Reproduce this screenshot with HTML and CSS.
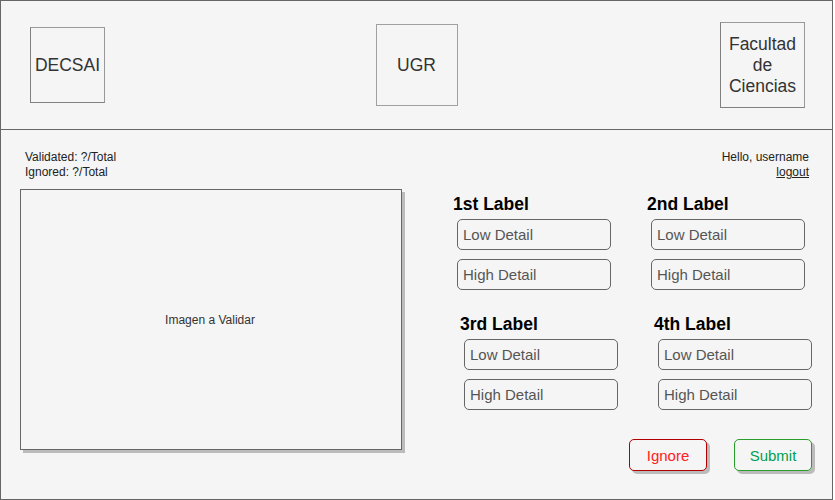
FILE: index.html
```html
<!DOCTYPE html>
<html lang="es">
<head>
<meta charset="utf-8">
<title>Validador</title>
<link rel="stylesheet" href="styles.css">
</head>
<body>
<div class="frame">
  <header class="header">
    <div class="logo logo-left">DECSAI</div>
    <div class="logo logo-center">UGR</div>
    <div class="logo logo-right">Facultad<br>de<br>Ciencias</div>
  </header>
  <section class="content">
    <div class="stats">
      <div class="counts">
        <div>Validated: ?/Total</div>
        <div>Ignored: ?/Total</div>
      </div>
      <div class="user">
        <div>Hello, username</div>
        <a class="logout" href="#">logout</a>
      </div>
    </div>
    <div class="main">
      <div class="image-box">Imagen a Validar</div>
      <div class="panel">
        <div class="row">
          <div class="group">
            <div class="label">1st Label</div>
            <input class="field" type="text" placeholder="Low Detail">
            <input class="field" type="text" placeholder="High Detail">
          </div>
          <div class="group">
            <div class="label">2nd Label</div>
            <input class="field" type="text" placeholder="Low Detail">
            <input class="field" type="text" placeholder="High Detail">
          </div>
        </div>
        <div class="row row-shift">
          <div class="group">
            <div class="label">3rd Label</div>
            <input class="field" type="text" placeholder="Low Detail">
            <input class="field" type="text" placeholder="High Detail">
          </div>
          <div class="group">
            <div class="label">4th Label</div>
            <input class="field" type="text" placeholder="Low Detail">
            <input class="field" type="text" placeholder="High Detail">
          </div>
        </div>
        <div class="actions">
          <button class="btn btn-ignore" type="button">Ignore</button>
          <button class="btn btn-submit" type="button">Submit</button>
        </div>
      </div>
    </div>
  </section>
</div>
</body>
</html>
```

FILE: styles.css
```css
* { box-sizing: border-box; }

html, body {
  margin: 0;
  padding: 0;
  background: #ffffff;
}

body {
  font-family: "Liberation Sans", Arial, sans-serif;
  color: #333333;
}

.frame {
  width: 833px;
  height: 500px;
  border: 1px solid #666666;
  background: #f5f5f5;
  overflow: hidden;
}

.header {
  height: 129px;
  border-bottom: 1px solid #666666;
  display: grid;
  grid-template-columns: 1fr auto 1fr;
  align-items: center;
  padding: 0 27px 0 29px;
}

.logo {
  display: flex;
  align-items: center;
  justify-content: center;
  text-align: center;
  font-size: 17.5px;
  line-height: 21px;
  color: #333333;
  border: 1px solid #999999;
  border-left-color: #808080;
  border-bottom-color: #808080;
}

.logo-left {
  justify-self: start;
  width: 75px;
  height: 76px;
}

.logo-center {
  justify-self: center;
  width: 82px;
  height: 82px;
  border-color: #a0a0a0;
  margin-right: 2px;
}

.logo-right {
  justify-self: end;
  width: 85px;
  height: 86px;
}

.content {
  padding: 20px 23px 0 19px;
}

.stats {
  display: flex;
  justify-content: space-between;
  font-size: 12px;
  line-height: 15px;
  color: #222222;
}

.counts {
  padding-left: 5px;
}

.user {
  text-align: right;
  display: flex;
  flex-direction: column;
  align-items: flex-end;
}

.logout {
  color: #222222;
  text-decoration: underline;
}

.main {
  display: flex;
  align-items: flex-start;
  margin-top: 9px;
}

.image-box {
  width: 382px;
  height: 261px;
  border: 1px solid #666666;
  box-shadow: 3px 3px 0 #bbbbbb;
  display: flex;
  align-items: center;
  justify-content: center;
  font-size: 12px;
  color: #333333;
  flex-shrink: 0;
  padding-right: 2px;
}

.panel {
  margin-left: 51px;
  padding-top: 5px;
  width: 359px;
}

.row {
  display: flex;
  gap: 36px;
}

.row-shift {
  margin-top: 24px;
  padding-left: 7px;
}

.group {
  width: 158px;
  display: flex;
  flex-direction: column;
}

.label {
  font-size: 17.5px;
  line-height: 20px;
  font-weight: bold;
  color: #000000;
  margin-bottom: 5px;
}

.field {
  display: block;
  width: 154px;
  height: 31px;
  margin: 0 0 9px 4px;
  padding: 0 5px;
  border: 1px solid #666666;
  border-radius: 5px;
  background: #f5f5f5;
  font-family: "Liberation Sans", Arial, sans-serif;
  font-size: 15px;
  color: #555555;
  outline: none;
}

.field:last-child {
  margin-bottom: 0;
}

.field::placeholder {
  color: #555555;
  opacity: 1;
}

.actions {
  display: flex;
  justify-content: flex-end;
  gap: 27px;
  margin-top: 29px;
}

.btn {
  width: 78px;
  height: 32px;
  border-radius: 5px;
  background: #f5f5f5;
  box-shadow: 3px 3px 0 #bbbbbb;
  font-family: "Liberation Sans", Arial, sans-serif;
  font-size: 15px;
  padding: 0;
  cursor: pointer;
}

.btn-ignore {
  border: 1px solid #b20000;
  color: #ff2020;
}

.btn-submit {
  border: 1px solid #2a9e2a;
  color: #00a050;
}
```
